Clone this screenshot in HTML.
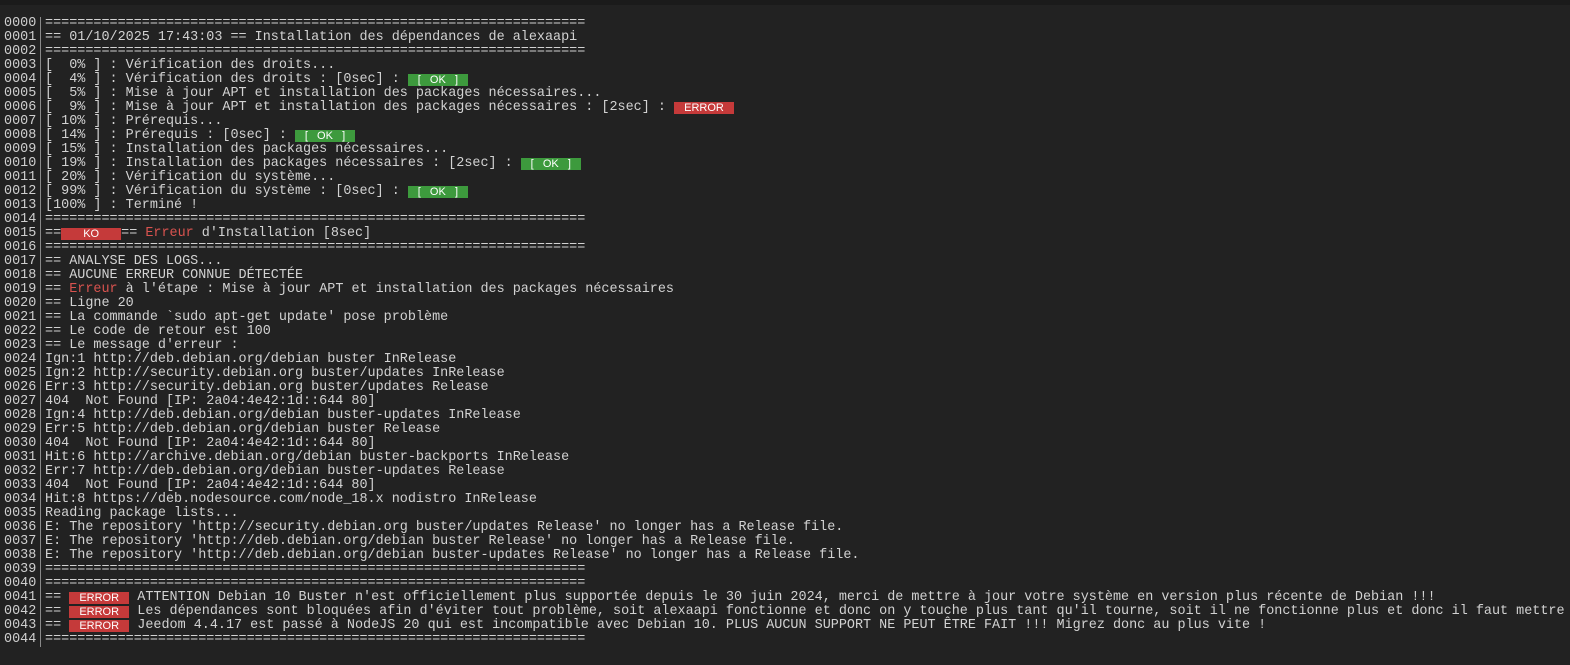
<!DOCTYPE html>
<html><head><meta charset="utf-8"><style>
body{margin:0;background:#222;width:1570px;height:665px;overflow:hidden}
.top{height:5px;background:#1b1b1b}
.log{position:absolute;top:17px;left:0;font-family:"Liberation Mono",monospace;font-size:13.45px;line-height:14px;color:#d2d2d2}
.r{height:14px;white-space:pre;overflow:visible}
.n{display:inline-block;width:40px;padding-left:4px;box-sizing:border-box;color:#cfcfcf;vertical-align:top}
.t{display:inline-block;border-left:1px solid #8a8a8a;padding-left:4px;height:14px;vertical-align:top}
.ok,.er{display:inline-block;width:60px;height:12px;line-height:12px;vertical-align:top;margin-top:1px;font-family:"Liberation Sans",sans-serif;font-size:11px;color:#fff;text-align:center}
.ok{background:#3d9a3d}
.er{background:#c53a3a}
.red{color:#d9534f}
</style></head><body><div class="top"></div>
<div class="log"><div class="r"><span class="n">0000</span><span class="t">===================================================================</span></div><div class="r"><span class="n">0001</span><span class="t">== 01/10/2025 17:43:03 == Installation des dépendances de alexaapi</span></div><div class="r"><span class="n">0002</span><span class="t">===================================================================</span></div><div class="r"><span class="n">0003</span><span class="t">[  0% ] : Vérification des droits...</span></div><div class="r"><span class="n">0004</span><span class="t">[  4% ] : Vérification des droits : [0sec] : <span class="ok">[   OK   ]</span></span></div><div class="r"><span class="n">0005</span><span class="t">[  5% ] : Mise à jour APT et installation des packages nécessaires...</span></div><div class="r"><span class="n">0006</span><span class="t">[  9% ] : Mise à jour APT et installation des packages nécessaires : [2sec] : <span class="er">ERROR</span></span></div><div class="r"><span class="n">0007</span><span class="t">[ 10% ] : Prérequis...</span></div><div class="r"><span class="n">0008</span><span class="t">[ 14% ] : Prérequis : [0sec] : <span class="ok">[   OK   ]</span></span></div><div class="r"><span class="n">0009</span><span class="t">[ 15% ] : Installation des packages nécessaires...</span></div><div class="r"><span class="n">0010</span><span class="t">[ 19% ] : Installation des packages nécessaires : [2sec] : <span class="ok">[   OK   ]</span></span></div><div class="r"><span class="n">0011</span><span class="t">[ 20% ] : Vérification du système...</span></div><div class="r"><span class="n">0012</span><span class="t">[ 99% ] : Vérification du système : [0sec] : <span class="ok">[   OK   ]</span></span></div><div class="r"><span class="n">0013</span><span class="t">[100% ] : Terminé !</span></div><div class="r"><span class="n">0014</span><span class="t">===================================================================</span></div><div class="r"><span class="n">0015</span><span class="t">==<span class="er">KO</span>== <span class="red">Erreur</span> d'Installation [8sec]</span></div><div class="r"><span class="n">0016</span><span class="t">===================================================================</span></div><div class="r"><span class="n">0017</span><span class="t">== ANALYSE DES LOGS...</span></div><div class="r"><span class="n">0018</span><span class="t">== AUCUNE ERREUR CONNUE DÉTECTÉE</span></div><div class="r"><span class="n">0019</span><span class="t">== <span class="red">Erreur</span> à l'étape : Mise à jour APT et installation des packages nécessaires</span></div><div class="r"><span class="n">0020</span><span class="t">== Ligne 20</span></div><div class="r"><span class="n">0021</span><span class="t">== La commande `sudo apt-get update' pose problème</span></div><div class="r"><span class="n">0022</span><span class="t">== Le code de retour est 100</span></div><div class="r"><span class="n">0023</span><span class="t">== Le message d'erreur :</span></div><div class="r"><span class="n">0024</span><span class="t">Ign:1 http://deb.debian.org/debian buster InRelease</span></div><div class="r"><span class="n">0025</span><span class="t">Ign:2 http://security.debian.org buster/updates InRelease</span></div><div class="r"><span class="n">0026</span><span class="t">Err:3 http://security.debian.org buster/updates Release</span></div><div class="r"><span class="n">0027</span><span class="t">404  Not Found [IP: 2a04:4e42:1d::644 80]</span></div><div class="r"><span class="n">0028</span><span class="t">Ign:4 http://deb.debian.org/debian buster-updates InRelease</span></div><div class="r"><span class="n">0029</span><span class="t">Err:5 http://deb.debian.org/debian buster Release</span></div><div class="r"><span class="n">0030</span><span class="t">404  Not Found [IP: 2a04:4e42:1d::644 80]</span></div><div class="r"><span class="n">0031</span><span class="t">Hit:6 http://archive.debian.org/debian buster-backports InRelease</span></div><div class="r"><span class="n">0032</span><span class="t">Err:7 http://deb.debian.org/debian buster-updates Release</span></div><div class="r"><span class="n">0033</span><span class="t">404  Not Found [IP: 2a04:4e42:1d::644 80]</span></div><div class="r"><span class="n">0034</span><span class="t">Hit:8 https://deb.nodesource.com/node_18.x nodistro InRelease</span></div><div class="r"><span class="n">0035</span><span class="t">Reading package lists...</span></div><div class="r"><span class="n">0036</span><span class="t">E: The repository 'http://security.debian.org buster/updates Release' no longer has a Release file.</span></div><div class="r"><span class="n">0037</span><span class="t">E: The repository 'http://deb.debian.org/debian buster Release' no longer has a Release file.</span></div><div class="r"><span class="n">0038</span><span class="t">E: The repository 'http://deb.debian.org/debian buster-updates Release' no longer has a Release file.</span></div><div class="r"><span class="n">0039</span><span class="t">===================================================================</span></div><div class="r"><span class="n">0040</span><span class="t">===================================================================</span></div><div class="r"><span class="n">0041</span><span class="t">== <span class="er">ERROR</span> ATTENTION Debian 10 Buster n'est officiellement plus supportée depuis le 30 juin 2024, merci de mettre à jour votre système en version plus récente de Debian !!!</span></div><div class="r"><span class="n">0042</span><span class="t">== <span class="er">ERROR</span> Les dépendances sont bloquées afin d'éviter tout problème, soit alexaapi fonctionne et donc on y touche plus tant qu'il tourne, soit il ne fonctionne plus et donc il faut mettre à jour</span></div><div class="r"><span class="n">0043</span><span class="t">== <span class="er">ERROR</span> Jeedom 4.4.17 est passé à NodeJS 20 qui est incompatible avec Debian 10. PLUS AUCUN SUPPORT NE PEUT ÊTRE FAIT !!! Migrez donc au plus vite !</span></div><div class="r"><span class="n">0044</span><span class="t">===================================================================</span></div></div>
</body></html>
